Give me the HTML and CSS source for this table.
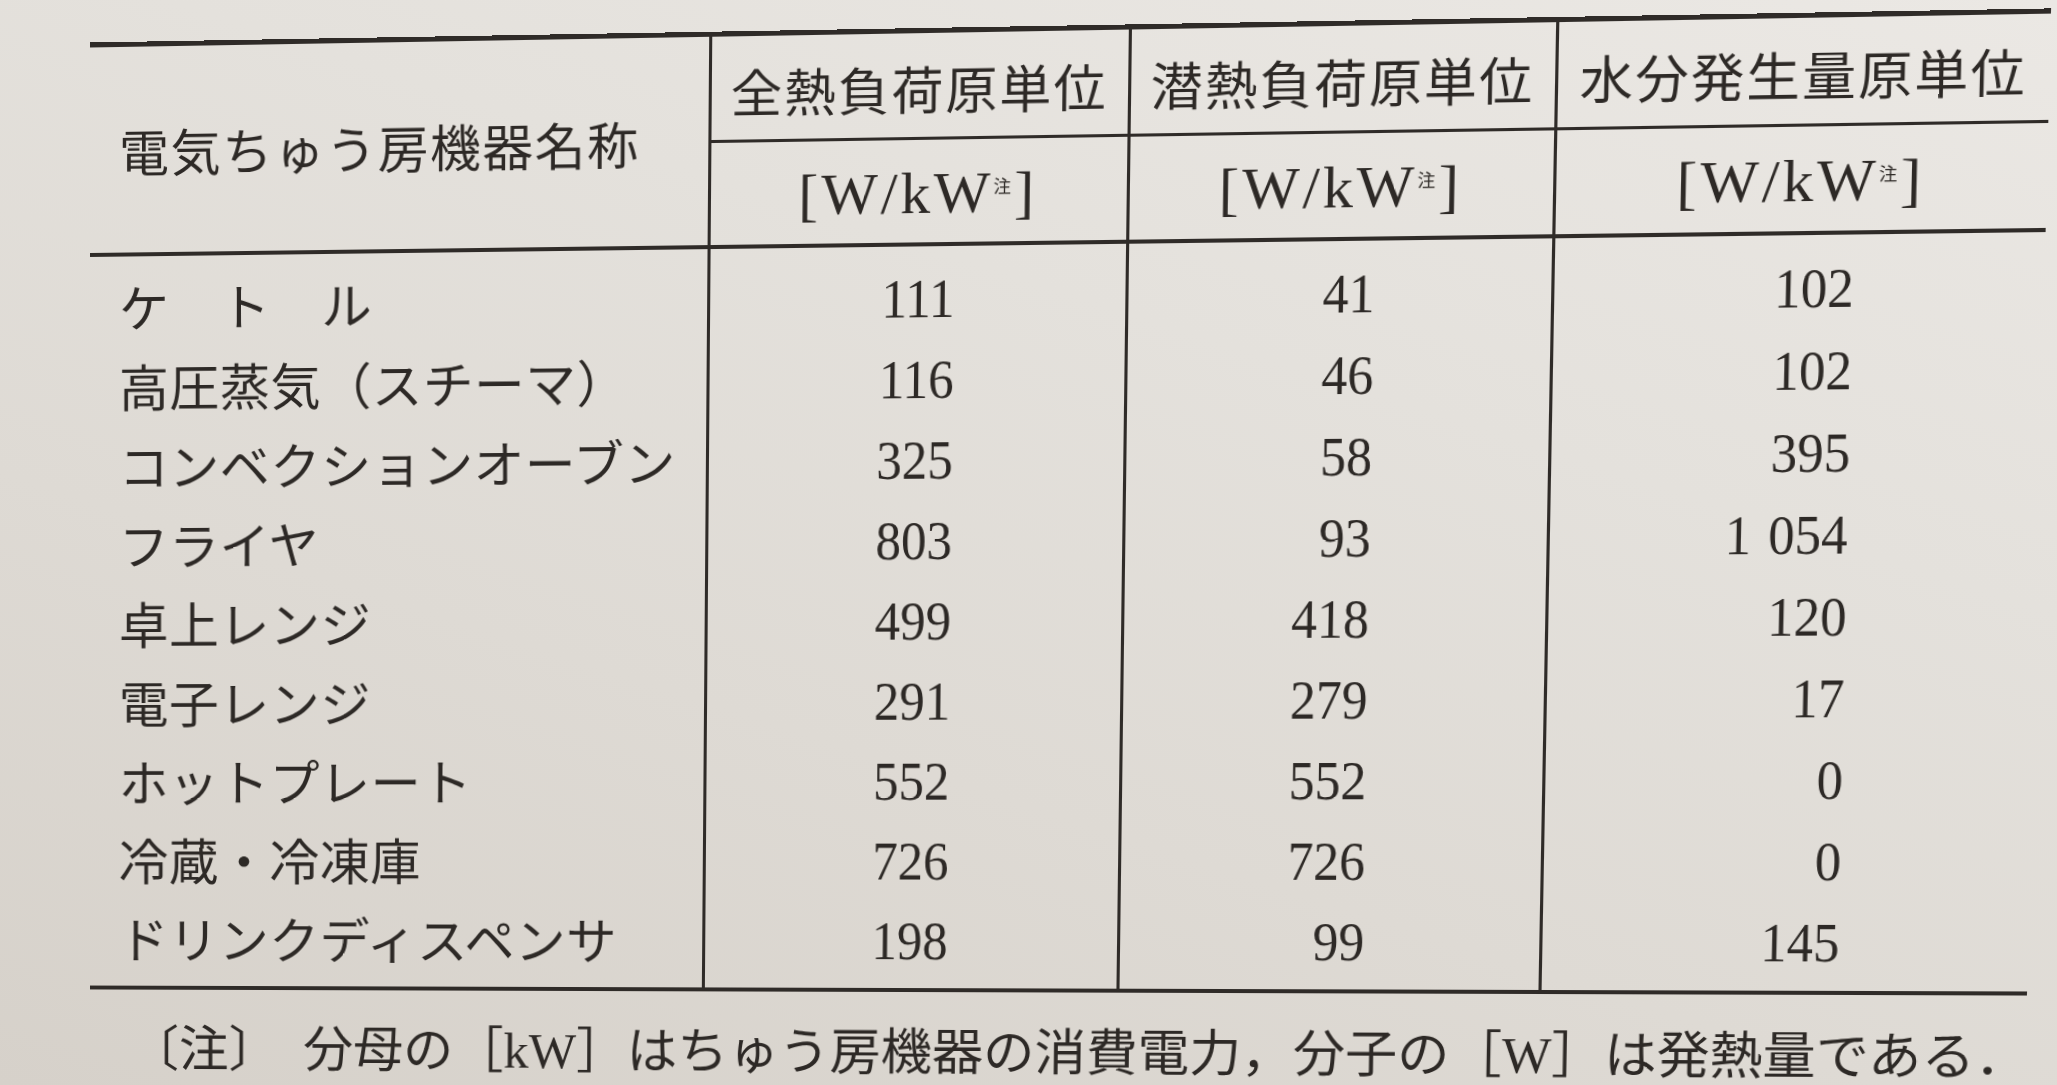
FILE: index.html
```html
<!DOCTYPE html>
<html lang="ja">
<head>
<meta charset="utf-8">
<title>電気ちゅう房機器の発熱原単位</title>
<link rel="stylesheet" href="styles.css">
</head>
<body>
<div class="page">
  <div class="tbl">
    <div class="head">
      <div class="hname">電気ちゅう房機器名称</div>
      <div class="htitle">全熱負荷原単位</div>
      <div class="htitle">潜熱負荷原単位</div>
      <div class="htitle">水分発生量原単位</div>
      <div class="hunit"><span class="unit">[W/kW<sup class="chu">注</sup>]</span></div>
      <div class="hunit"><span class="unit">[W/kW<sup class="chu">注</sup>]</span></div>
      <div class="hunit"><span class="unit">[W/kW<sup class="chu">注</sup>]</span></div>
    </div>
    <div class="body">
      <div class="col names">
        <div class="cell">ケ　ト　ル</div>
        <div class="cell">高圧蒸気（スチーマ）</div>
        <div class="cell">コンベクションオーブン</div>
        <div class="cell">フライヤ</div>
        <div class="cell">卓上レンジ</div>
        <div class="cell">電子レンジ</div>
        <div class="cell">ホットプレート</div>
        <div class="cell">冷蔵・冷凍庫</div>
        <div class="cell">ドリンクディスペンサ</div>
      </div>
      <div class="col num n1">
        <div class="cell"><span>111</span></div>
        <div class="cell"><span>116</span></div>
        <div class="cell"><span>325</span></div>
        <div class="cell"><span>803</span></div>
        <div class="cell"><span>499</span></div>
        <div class="cell"><span>291</span></div>
        <div class="cell"><span>552</span></div>
        <div class="cell"><span>726</span></div>
        <div class="cell"><span>198</span></div>
      </div>
      <div class="col num n2">
        <div class="cell"><span>41</span></div>
        <div class="cell"><span>46</span></div>
        <div class="cell"><span>58</span></div>
        <div class="cell"><span>93</span></div>
        <div class="cell"><span>418</span></div>
        <div class="cell"><span>279</span></div>
        <div class="cell"><span>552</span></div>
        <div class="cell"><span>726</span></div>
        <div class="cell"><span>99</span></div>
      </div>
      <div class="col num n3">
        <div class="cell"><span>102</span></div>
        <div class="cell"><span>102</span></div>
        <div class="cell"><span>395</span></div>
        <div class="cell"><span>1&nbsp;054</span></div>
        <div class="cell"><span>120</span></div>
        <div class="cell"><span>17</span></div>
        <div class="cell"><span>0</span></div>
        <div class="cell"><span>0</span></div>
        <div class="cell"><span>145</span></div>
      </div>
    </div>
  </div>
  <p class="note">〔注〕　分母の［<span class="lat">kW</span>］はちゅう房機器の消費電力，分子の［<span class="lat">W</span>］は発熱量である．</p>
</div>
</body>
</html>
```

FILE: styles.css
```css
* {
  box-sizing: border-box;
}

html,
body {
  margin: 0;
  padding: 0;
}

body {
  width: 2057px;
  height: 1085px;
  overflow: hidden;
  color: #2d2926;
  background: linear-gradient(18deg, #d6d1ca 0%, #dedad4 35%, #e4e1dc 65%, #ebe8e4 100%);
}

.page {
  width: 1881px;
  transform-origin: 0 0;
  transform: matrix3d(0.998038, -0.018314, 0, -0.000021694,
                      0.0011225, 1.000767, 0, 0.000012471,
                      0, 0, 1, 0,
                      90, 45, 0, 1) translate(0, -2.5px);
}

.tbl {
  width: 1881px;
  border-top: 5px solid #2f2b28;
  border-bottom: 4px solid #2f2b28;
}

.head {
  display: grid;
  grid-template-columns: 610.5px 405px 405px 460.5px;
  grid-template-rows: 102px 104px;
  border-bottom: 4px solid #2f2b28;
}

.hname {
  grid-row: 1 / 3;
  display: flex;
  align-items: center;
  padding-left: 29px;
  font-family: "Noto Sans CJK JP", "Noto Sans CJK SC", sans-serif;
  font-weight: 400;
  font-size: 50px;
  line-height: 1.448;
  letter-spacing: 1.5px;
}

.htitle {
  display: flex;
  align-items: center;
  justify-content: center;
  padding-top: 4px;
  border-left: 3px solid #2f2b28;
  font-family: "Noto Sans CJK JP", "Noto Sans CJK SC", sans-serif;
  font-weight: 400;
  font-size: 50px;
  line-height: 1.448;
  letter-spacing: 2px;
  white-space: nowrap;
}

.hunit {
  display: flex;
  align-items: center;
  justify-content: center;
  padding-top: 4px;
  border-left: 3px solid #2f2b28;
  border-top: 3px solid #2f2b28;
}

.unit {
  font-family: "Liberation Serif", "DejaVu Serif", serif;
  font-size: 58px;
  letter-spacing: 3px;
  white-space: nowrap;
}

.chu {
  font-family: "Noto Sans CJK JP", "Noto Sans CJK SC", sans-serif;
  font-size: 17px;
  line-height: 0;
  vertical-align: 19px;
  letter-spacing: 0;
  margin-right: 3px;
}

.body {
  display: grid;
  grid-template-columns: 610.5px 405px 405px 460.5px;
}

.col {
  padding: 12px 0 6.5px;
}

.col.num {
  border-left: 3px solid #2f2b28;
}

.cell {
  height: 80px;
  white-space: nowrap;
}

.names .cell {
  padding-left: 29px;
  font-family: "Noto Sans CJK JP", "Noto Sans CJK SC", sans-serif;
  font-weight: 400;
  font-size: 50px;
  line-height: 74px;
  letter-spacing: 0.5px;
}

.num .cell {
  text-align: right;
  font-family: "Liberation Serif", "DejaVu Serif", serif;
  font-size: 55px;
  line-height: 80px;
}

.num .cell span {
  display: inline-block;
  transform: scaleX(0.9);
  transform-origin: 100% 50%;
  word-spacing: 4px;
}

.n1 .cell {
  padding-right: 164px;
}

.n2 .cell {
  padding-right: 167px;
}

.n3 .cell {
  padding-right: 177px;
}

.note {
  margin: 26px 0 0;
  padding-left: 40px;
  font-family: "Noto Sans CJK JP", "Noto Sans CJK SC", sans-serif;
  font-weight: 400;
  font-size: 50px;
  line-height: 60px;
  white-space: nowrap;
}

.lat {
  font-family: "Liberation Serif", "DejaVu Serif", serif;
  font-size: 50px;
}
```
